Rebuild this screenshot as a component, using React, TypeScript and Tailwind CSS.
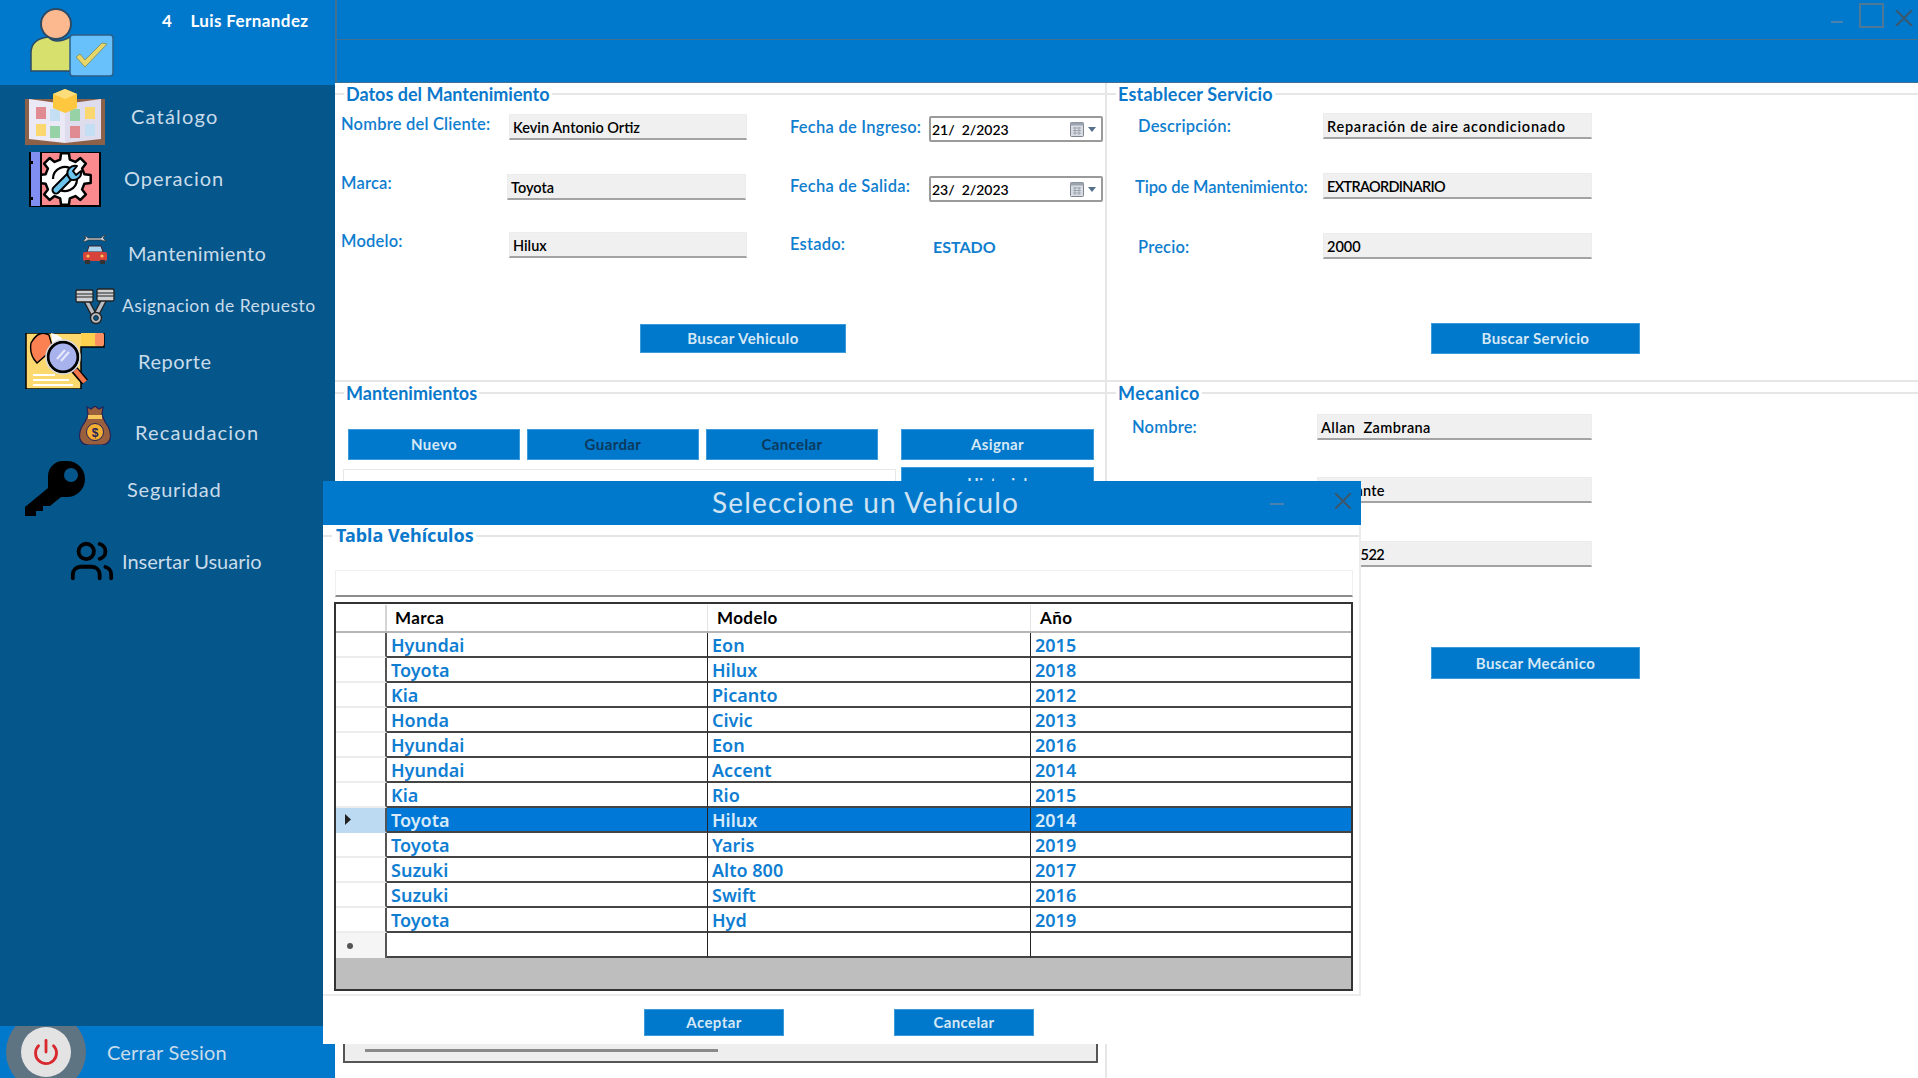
import React from 'react';
import { Power, Users } from 'lucide-react';

const vehiculos = [
    ['Hyundai', 'Eon', '2015'],
    ['Toyota', 'Hilux', '2018'],
    ['Kia', 'Picanto', '2012'],
    ['Honda', 'Civic', '2013'],
    ['Hyundai', 'Eon', '2016'],
    ['Hyundai', 'Accent', '2014'],
    ['Kia', 'Rio', '2015'],
    ['Toyota', 'Hilux', '2014'],
    ['Toyota', 'Yaris', '2019'],
    ['Suzuki', 'Alto 800', '2017'],
    ['Suzuki', 'Swift', '2016'],
    ['Toyota', 'Hyd', '2019'],
];

const IconCatalogo = () => (
    <svg width="80" height="56" viewBox="0 0 80 56">
        <rect x="0" y="10" width="80" height="46" fill="#8c6149" />
        <path d="M4 10 L40 15 L40 54 L4 50 Z" fill="#ece9f6" />
        <path d="M76 10 L40 15 L40 54 L76 50 Z" fill="#dfdcee" />
        <rect x="11" y="18" width="10" height="12" fill="#e08a92" />
        <rect x="25" y="20" width="10" height="12" fill="#c4def4" />
        <rect x="11" y="35" width="10" height="12" fill="#fbd76f" />
        <rect x="25" y="37" width="10" height="12" fill="#97d2a6" />
        <rect x="45" y="20" width="10" height="12" fill="#97d2a6" />
        <rect x="60" y="18" width="10" height="12" fill="#fbd76f" />
        <rect x="45" y="37" width="10" height="12" fill="#e08a92" />
        <rect x="60" y="35" width="10" height="12" fill="#c4def4" />
        <path d="M28 5 L40 0 L52 5 L52 19 L40 24 L28 19 Z" fill="#fdc83f" />
        <path d="M28 5 L40 10 L52 5 L40 0 Z" fill="#fedd7a" />
    </svg>
);

const gearPath = (() => {
    const pts: string[] = [];
    for (let i = 0; i < 8; i++) {
        const a = (i / 8) * Math.PI * 2;
        [[-0.24, 20], [-0.15, 26], [0.15, 26], [0.24, 20]].forEach(([o, r]) => {
            const t = a + o;
            pts.push(`${(36 + Math.cos(t) * r).toFixed(1)} ${(27 + Math.sin(t) * r).toFixed(1)}`);
        });
    }
    return `M${pts.join(' L')} Z`;
})();

const IconOperacion = () => (
    <svg width="72" height="55" viewBox="0 0 72 55">
        <rect x="1" y="0" width="70" height="54" fill="#fb8a8e" stroke="#000" strokeWidth="2" />
        <path d={gearPath} fill="#fff" stroke="#000" strokeWidth="2.5" strokeLinejoin="round" />
        <rect x="2" y="0" width="9" height="54" fill="#7f8ef0" />
        <rect x="11" y="0" width="2" height="54" fill="#000" />
        <rect x="1" y="9" width="3" height="3" fill="#000" />
        <rect x="1" y="45" width="3" height="3" fill="#000" />
        <path d="M24 27 A12 12 0 0 1 44 18 M48 27 A12 12 0 0 1 28 36" fill="none" stroke="#000" strokeWidth="2.2" />
        <path d="M27 38 L41 24" stroke="#000" strokeWidth="9" strokeLinecap="round" />
        <path d="M27 38 L41 24" stroke="#6cc4ec" strokeWidth="5" strokeLinecap="round" />
        <path d="M39 24 A7.5 7.5 0 0 1 48 14 L44 19 L47 23 L52 19 A7.5 7.5 0 0 1 41 27 Z" fill="#6cc4ec" stroke="#000" strokeWidth="2" strokeLinejoin="round" />
    </svg>
);

const IconMantenimiento = () => (
    <svg width="27" height="31" viewBox="0 0 27 31">
        <path d="M3 3 Q6 3 7 5 L20 5 Q21 3 25 2 L22 5 L25 8 Q21 8 20 7 L7 7 Q5 9 2 8 L5 5 Z" fill="#c9ccd2" stroke="#333" strokeWidth="0.7" />
        <path d="M6 19 L8 13 L20 13 L22 19 Z" fill="#a9d4ee" stroke="#43222a" strokeWidth="1" />
        <rect x="2" y="19" width="24" height="9" rx="2" fill="#d7433a" />
        <rect x="4" y="27" width="5" height="4" fill="#333" />
        <rect x="19" y="27" width="5" height="4" fill="#333" />
        <circle cx="7" cy="23" r="1.6" fill="#fbc75a" />
        <circle cx="21" cy="23" r="1.6" fill="#fbc75a" />
    </svg>
);

const IconPiston = () => (
    <svg width="40" height="37" viewBox="0 0 40 37">
        <path d="M11 12 L20 29 M29 12 L20 29" stroke="#222" strokeWidth="6" />
        <path d="M11 12 L20 29 M29 12 L20 29" stroke="#b9bcc2" strokeWidth="3.5" />
        <rect x="1" y="2" width="17" height="12" rx="1.5" fill="#cfd0d4" stroke="#222" strokeWidth="1.3" />
        <rect x="22" y="1" width="17" height="12" rx="1.5" fill="#cfd0d4" stroke="#222" strokeWidth="1.3" />
        <path d="M1 6 H18 M1 9 H18 M22 5 H39 M22 8 H39" stroke="#222" strokeWidth="1" />
        <circle cx="21" cy="30" r="5.5" fill="#b9bcc2" stroke="#222" strokeWidth="1.4" />
        <circle cx="21" cy="30" r="2.4" fill="#05568a" stroke="#222" strokeWidth="1" />
    </svg>
);

const IconReporte = () => (
    <svg width="80" height="56" viewBox="0 0 80 56">
        <path d="M1 0 H79 V14 H56 V56 H1 Z" fill="#fcd96f" stroke="#000" strokeWidth="1.5" />
        <rect x="56" y="0" width="22" height="13" fill="#fdd14d" />
        <rect x="70" y="0" width="9" height="13" rx="2" fill="#fb8f62" />
        <path d="M6 10 Q14 -4 24 2 L28 16 L12 30 Q4 22 6 10 Z" fill="#fb8152" stroke="#000" strokeWidth="1.4" />
        <path d="M26 0 Q38 2 40 12 L28 14 Z" fill="#fff" />
        <path d="M8 42 H30 M8 47 H44 M8 52 H48" stroke="#fff" strokeWidth="2" />
        <path d="M47 34 L60 49" stroke="#000" strokeWidth="8" />
        <path d="M50 37 L60 49" stroke="#f2784b" strokeWidth="5" />
        <circle cx="38" cy="24" r="15" fill="#a8b2ec" stroke="#000" strokeWidth="3" />
        <circle cx="38" cy="24" r="17" fill="none" stroke="#d8dadd" strokeWidth="1.5" />
        <path d="M32 26 L40 17 M36 28 L44 19" stroke="#e8ebfb" strokeWidth="2" />
    </svg>
);

const IconBolsa = () => (
    <svg width="32" height="39" viewBox="0 0 32 39">
        <path d="M8 1 L12 3 L16 0 L20 3 L24 1 L23 9 L26 16 Q33 25 31 33 Q29 39 22 39 H10 Q3 39 1 33 Q-1 25 6 16 L9 9 Z" fill="#9a5f3c" stroke="#23235a" strokeWidth="1.2" />
        <rect x="9" y="9" width="14" height="4" fill="#f7c65a" />
        <circle cx="16" cy="26" r="8.5" fill="#f4ae32" stroke="#23235a" strokeWidth="1" />
        <text x="16" y="30.5" textAnchor="middle" fontSize="12" fontWeight="700" fill="#23235a" fontFamily="Liberation Sans, sans-serif">$</text>
    </svg>
);

const IconLlave = () => (
    <svg width="60" height="55" viewBox="0 0 60 55">
        <path d="M38 0 H42 A18 18 0 0 1 42 36 H36 L25 45 H18 V50 H11 V55 H0 V46 L23 27 V15 A15 15 0 0 1 38 0 Z" fill="#000" />
        <circle cx="46" cy="14" r="7" fill="#05568a" />
    </svg>
);

const NavItem = ({ icon, label, className, iconBox, labelBox }: { icon: React.ReactNode; label: string; className: string; iconBox: string; labelBox: string }) => (
    <div className={`flex items-center ${className}`}>
        <div className={`flex justify-center shrink-0 ${iconBox}`}>{icon}</div>
        <span className={`text-[#c9dcea] whitespace-nowrap ${labelBox}`}>{label}</span>
    </div>
);

const Legend = ({ title, className }: { title: string; className?: string }) => (
    <div className="flex items-center h-[22px]">
        <span className="w-[9px] h-[2px] bg-[#e6e6e6]" />
        <span className={`px-[2px] font-bold text-[#0a78cb] whitespace-nowrap ${className ?? 'text-[18px]'}`}>{title}</span>
        <span className="flex-1 h-[2px] bg-[#e6e6e6]" />
    </div>
);

const Field = ({ value, className }: { value: string; className: string }) => (
    <div className={`flex items-center h-[26px] pl-[3px] pt-[2px] bg-[#f0f0f0] border border-[#ececec] border-b-2 border-b-[#a3a3a3] text-[14.5px] font-semibold text-black whitespace-pre ${className}`}>
        {value}
    </div>
);

const Label = ({ children, className }: { children: string; className?: string }) => (
    <span className={`text-[16.5px] font-semibold text-[#0f7ecf] whitespace-nowrap ${className ?? 'tracking-[0.2px]'}`}>{children}</span>
);

const DatePick = ({ value }: { value: string }) => (
    <div className="flex items-center justify-between w-[174px] h-[26px] pl-[1px] pr-[5px] border-2 border-[#9a9a9a] rounded-[2px] bg-white text-[14px] font-semibold text-black">
        <span className="whitespace-pre">{value}</span>
        <span className="flex items-center gap-[4px]">
            <svg width="14" height="15" viewBox="0 0 14 15">
                <rect x="0.5" y="0.5" width="13" height="14" rx="1" fill="#d8dce2" stroke="#7d8590" />
                <rect x="0.5" y="0.5" width="13" height="3" fill="#9aa3ae" />
                <path d="M3 6 H11 M3 8.5 H11 M3 11 H11 M5 5 V13 M9 5 V13" stroke="#8a929d" strokeWidth="0.7" />
            </svg>
            <svg width="8" height="5" viewBox="0 0 8 5"><path d="M0 0 H8 L4 5 Z" fill="#55708c" /></svg>
        </span>
    </div>
);

const Btn = ({ children, className }: { children: string; className: string }) => (
    <div className={`flex items-center justify-center bg-[#0078cc] border border-[#3d9bdc] text-[15px] tracking-[0.4px] font-bold whitespace-nowrap ${className}`}>
        {children}
    </div>
);

export default function App() {
    return (
        <div className="relative flex w-[1918px] h-[1078px] overflow-hidden bg-white font-['Lato','Noto_Sans',sans-serif]">
            <aside className="flex flex-col w-[335px] shrink-0 bg-[#05568a]">
                <div className="flex items-start h-[85px] bg-[#0079cd]">
                    <div className="w-[162px] shrink-0 pl-[30px] pt-[7px]">
                        <svg width="85" height="70" viewBox="0 0 85 70">
                            <circle cx="26" cy="17" r="15" fill="#fcb88f" stroke="#2d4a64" strokeWidth="2" />
                            <path d="M1 64 V46 Q1 32 18 30 Q26 38 40 30 Q52 33 54 40 V64 Z" fill="#d7e06c" stroke="#2d4a64" strokeWidth="1.5" />
                            <rect x="40" y="28" width="43" height="41" rx="3" fill="#69c1fb" stroke="#2d5f88" strokeWidth="1.5" />
                            <path d="M46 50 L55 60 L77 37 L72 36 L55 53 L50 47 Z" fill="#e8d768" stroke="#7b8a58" strokeWidth="0.8" />
                        </svg>
                    </div>
                    <span className="pt-[8px] text-[17px] tracking-[0.4px] font-bold text-white whitespace-pre">4    Luis Fernandez</span>
                </div>

                <nav className="flex flex-col flex-1 text-[20px]">
                    <NavItem icon={<IconCatalogo />} label="Catálogo" className="h-[60px] mt-[2px]" iconBox="w-[80px] ml-[25px]" labelBox="ml-[26px] mb-[3px] tracking-[1.2px]" />
                    <NavItem icon={<IconOperacion />} label="Operacion" className="h-[57px] mt-[4px]" iconBox="w-[72px] ml-[29px]" labelBox="ml-[23px] mb-[4px] tracking-[0.95px]" />
                    <NavItem icon={<IconMantenimiento />} label="Mantenimiento" className="h-[40px] mt-[25px]" iconBox="w-[27px] ml-[81px] mb-[10px]" labelBox="ml-[20px] tracking-[0.3px]" />
                    <NavItem icon={<IconPiston />} label="Asignacion de Repuesto" className="h-[40px] mt-[13px] text-[17.5px]" iconBox="w-[40px] ml-[75px]" labelBox="ml-[7px] tracking-[0.45px]" />
                    <NavItem icon={<IconReporte />} label="Reporte" className="h-[56px] mt-[7px]" iconBox="w-[80px] ml-[25px]" labelBox="ml-[33px] tracking-[0.5px]" />
                    <NavItem icon={<IconBolsa />} label="Recaudacion" className="h-[40px] mt-[23px]" iconBox="w-[32px] ml-[79px] mb-[14px]" labelBox="ml-[24px] tracking-[1.2px]" />
                    <NavItem icon={<IconLlave />} label="Seguridad" className="h-[55px] mt-[9px]" iconBox="w-[60px] ml-[25px]" labelBox="ml-[42px] tracking-[0.8px]" />
                    <NavItem icon={<Users size={46} color="#000" strokeWidth={2} />} label="Insertar Usuario" className="h-[48px] mt-[21px]" iconBox="w-[48px] ml-[68px]" labelBox="ml-[6px]" />
                </nav>

                <div className="relative flex items-center h-[52px] bg-[#0079cd] overflow-hidden">
                    <div className="absolute left-[6px] top-[-14px] flex items-center justify-center w-[80px] h-[80px] rounded-full bg-[#5f7482]">
                        <div className="flex items-center justify-center w-[50px] h-[50px] rounded-full bg-[#e3e3e3]">
                            <Power size={28} color="#d8292f" strokeWidth={2.4} />
                        </div>
                    </div>
                    <span className="ml-[107px] text-[20px] tracking-[0.2px] text-[#c9dcea]">Cerrar Sesion</span>
                </div>
            </aside>

            <main className="flex flex-col flex-1 min-w-0">
                <div className="flex items-center justify-end h-[39px] pr-[5px] gap-[11px] bg-[#0079cd] border-l-2 border-[#44708f]">
                    <span className="w-[12px] h-[2px] mt-[4px] mr-[5px] bg-[#4a82ad]" />
                    <span className="w-[25px] h-[25px] mb-[8px] border-2 border-[#4f7896]" />
                    <svg width="18" height="16" viewBox="0 0 18 16" className="mb-[4px]"><path d="M1 0 L17 16 M17 0 L1 16" stroke="#3c566c" strokeWidth="2" /></svg>
                </div>
                <div className="h-[44px] bg-[#0079cd] border-t border-b border-l-2 border-[#44708f]" />

                <div className="flex h-[299px] border-b-2 border-[#e6e6e6]">
                    <section className="w-[772px] shrink-0 border-r-2 border-[#e6e6e6]">
                        <Legend title="Datos del Mantenimiento" />
                        <div className="flex pt-[9px]">
                            <div className="w-[456px] shrink-0 pl-[6px]">
                                <div className="flex items-center h-[26px]">
                                    <Label className="w-[166px] mb-[6px] tracking-[0.2px]">Nombre del Cliente:</Label>
                                    <Field value="Kevin Antonio Ortiz" className="w-[238px] ml-[2px]" />
                                </div>
                                <div className="flex items-center h-[26px] mt-[34px]">
                                    <Label className="w-[166px] mb-[8px] tracking-[0.2px]">Marca:</Label>
                                    <Field value="Toyota" className="w-[239px]" />
                                </div>
                                <div className="flex items-center h-[26px] mt-[32px]">
                                    <Label className="w-[166px] mb-[7px] tracking-[0.2px]">Modelo:</Label>
                                    <Field value="Hilux" className="w-[238px] ml-[2px]" />
                                </div>
                            </div>
                            <div className="pt-[2px]">
                                <div className="flex items-center h-[26px]">
                                    <Label className="w-[138px] -ml-[1px] mr-[1px] mb-[3px] tracking-[0.25px]">Fecha de Ingreso:</Label>
                                    <DatePick value="21/  2/2023" />
                                </div>
                                <div className="flex items-center h-[26px] mt-[34px]">
                                    <Label className="w-[138px] -ml-[1px] mr-[1px] mb-[5px] tracking-[0.25px]">Fecha de Salida:</Label>
                                    <DatePick value="23/  2/2023" />
                                </div>
                                <div className="flex items-center h-[26px] mt-[32px]">
                                    <Label className="w-[142px] -ml-[1px] mr-[1px] mb-[6px] tracking-[0.2px]">Estado:</Label>
                                    <span className="text-[16px] font-bold text-[#0f7ecf]">ESTADO</span>
                                </div>
                            </div>
                        </div>
                        <Btn className="w-[206px] h-[29px] ml-[305px] mt-[64px] text-[#d6e8f5]">Buscar Vehiculo</Btn>
                    </section>

                    <section className="flex-1 min-w-0">
                        <Legend title="Establecer Servicio" className="text-[18px] tracking-[0.2px]" />
                        <div className="pt-[8px]">
                            <div className="flex items-center h-[26px]">
                                <Label className="w-[216px] pl-[31px] tracking-[0.2px]">Descripción:</Label>
                                <Field value="Reparación de aire acondicionado" className="w-[269px] tracking-[0.75px]" />
                            </div>
                            <div className="flex items-center h-[26px] mt-[34px]">
                                <Label className="w-[216px] pl-[28px] pt-[2px] tracking-[-0.1px]">Tipo de Mantenimiento:</Label>
                                <Field value="EXTRAORDINARIO" className="w-[269px] tracking-[-0.7px]" />
                            </div>
                            <div className="flex items-center h-[26px] mt-[34px]">
                                <Label className="w-[216px] pl-[31px] pt-[2px] tracking-[0.2px]">Precio:</Label>
                                <Field value="2000" className="w-[269px]" />
                            </div>
                        </div>
                        <Btn className="w-[209px] h-[31px] ml-[324px] mt-[64px] text-[#d6e8f5]">Buscar Servicio</Btn>
                    </section>
                </div>

                <div className="flex flex-1 min-h-0">
                    <section className="flex flex-col w-[772px] shrink-0 border-r-2 border-[#e6e6e6]">
                        <Legend title="Mantenimientos" />
                        <div className="flex pl-[8px] pt-[25px]">
                            <div className="w-[553px] shrink-0">
                                <div className="flex gap-[7px] pl-[5px]">
                                    <Btn className="w-[172px] h-[31px] text-[#d6e8f5]">Nuevo</Btn>
                                    <Btn className="w-[172px] h-[31px] text-[#0a3a5e]">Guardar</Btn>
                                    <Btn className="w-[172px] h-[31px] text-[#0a3a5e]">Cancelar</Btn>
                                </div>
                                <div className="h-[60px] mt-[9px] border border-[#e8e8e8]" />
                            </div>
                            <div className="flex flex-col gap-[7px] w-[193px] ml-[5px]">
                                <Btn className="h-[31px] text-[#d6e8f5]">Asignar</Btn>
                                <Btn className="h-[33px] text-[#d6e8f5]">Historial</Btn>
                            </div>
                        </div>
                        <div className="flex flex-col justify-end h-[400px] w-[755px] mt-auto mb-[15px] ml-[8px] pb-[9px] pl-[20px] bg-[#eeeeee] border-2 border-[#555]">
                            <span className="w-[353px] h-[3px] bg-[#8a8a8a]" />
                        </div>
                    </section>

                    <section className="flex-1 min-w-0">
                        <Legend title="Mecanico" className="text-[18px] tracking-[0.5px]" />
                        <div className="pt-[10px]">
                            <div className="flex items-center h-[26px]">
                                <Label className="w-[210px] pl-[25px] tracking-[0.2px]">Nombre:</Label>
                                <Field value="Allan  Zambrana" className="w-[275px] tracking-[0.4px]" />
                            </div>
                            <div className="flex items-center h-[26px] mt-[37px] pl-[210px]">
                                <Field value="Ayudante" className="w-[275px] tracking-[0.3px]" />
                            </div>
                            <div className="flex items-center h-[26px] mt-[38px] pl-[210px]">
                                <Field value="99855522" className="w-[275px] tracking-[-0.5px]" />
                            </div>
                        </div>
                        <Btn className="w-[209px] h-[32px] ml-[324px] mt-[80px] text-[#d6e8f5]">Buscar Mecánico</Btn>
                    </section>
                </div>
            </main>

            {/* ventana modal encima del formulario */}
            <div className="absolute left-[323px] top-[481px] flex flex-col w-[1038px] h-[563px] bg-white">
                <div className="relative flex items-center h-[44px] shrink-0 pl-[389px] pb-[2px] bg-[#0079cd]">
                    <span className="text-[28px] tracking-[1.2px] text-[#cfe3f2] whitespace-nowrap">Seleccione un Vehículo</span>
                    <span className="absolute left-[947px] top-[22px] w-[14px] h-[2px] bg-[#4a82ad]" />
                    <svg width="16" height="16" viewBox="0 0 16 16" className="absolute left-[1012px] top-[12px]"><path d="M0 0 L16 16 M16 0 L0 16" stroke="#3c566c" strokeWidth="2" /></svg>
                </div>
                <div className="flex flex-col h-[471px] border-r-2 border-b-2 border-[#ececec]">
                    <Legend title="Tabla Vehículos" className="text-[18px] font-['Noto_Sans',sans-serif] ml-[2px] mb-[2px]" />
                    <div className="h-[27px] mt-[23px] ml-[12px] mr-[6px] border border-[#efefef] border-b-2 border-b-[#8c8c8c]" />
                    <div className="flex flex-col h-[389px] mt-[5px] ml-[11px] mr-[6px] border-2 border-[#333] bg-[#bebebe]">
                        <div className="flex h-[29px] shrink-0 pt-[1px] bg-white border-b-2 border-[#b5b5b5] text-[17px] tracking-[0.4px] font-bold text-black">
                            <div className="w-[51px] shrink-0 border-r-2 border-[#d4d4d4]" />
                            <div className="w-[321px] shrink-0 pl-[8px] border-r border-[#e4e4e4]">Marca</div>
                            <div className="w-[323px] shrink-0 pl-[9px] border-r border-[#e4e4e4]">Modelo</div>
                            <div className="flex-1 pl-[9px]">Año</div>
                        </div>
                        {vehiculos.map((v, i) => {
                            const selected = i === 7;
                            return (
                                <div key={i} className={`flex h-[25px] shrink-0 font-['Noto_Sans',sans-serif] text-[18px] font-semibold leading-[25px] ${selected ? 'bg-[#0078d7] text-[#d9ebf8]' : 'bg-white text-[#0f7ed2]'}`}>
                                    <div className={`flex items-center w-[51px] shrink-0 pl-[9px] border-r-2 border-b-2 border-r-[#555] ${selected ? 'bg-[#bcdaf2] border-b-[#bcdaf2]' : 'bg-white border-b-[#ededed]'}`}>
                                        {selected && <svg width="6" height="11" viewBox="0 0 6 11"><path d="M0 0 L6 5.5 L0 11 Z" fill="#222" /></svg>}
                                    </div>
                                    <div className="w-[321px] shrink-0 pl-[4px] border-r border-b-2 border-r-[#222] border-b-[#444]">{v[0]}</div>
                                    <div className="w-[323px] shrink-0 pl-[4px] border-r border-b-2 border-r-[#222] border-b-[#444]">{v[1]}</div>
                                    <div className="flex-1 pl-[4px] border-b-2 border-[#444]">{v[2]}</div>
                                </div>
                            );
                        })}
                        <div className="flex h-[25px] shrink-0 bg-white">
                            <div className="flex items-center w-[51px] shrink-0 pl-[11px] border-r-2 border-r-[#555] bg-[#f5f5f5]">
                                <span className="w-[6px] h-[6px] rounded-full bg-[#555]" />
                            </div>
                            <div className="w-[321px] shrink-0 border-r border-b-2 border-r-[#222] border-b-[#444]" />
                            <div className="w-[323px] shrink-0 border-r border-b-2 border-r-[#222] border-b-[#444]" />
                            <div className="flex-1 border-b-2 border-[#444]" />
                        </div>
                    </div>
                </div>
                <div className="flex pt-[13px] pl-[321px] gap-[110px]">
                    <Btn className="w-[140px] h-[27px] text-[#d6e8f5]">Aceptar</Btn>
                    <Btn className="w-[140px] h-[27px] text-[#d6e8f5]">Cancelar</Btn>
                </div>
            </div>
        </div>
    );
}
